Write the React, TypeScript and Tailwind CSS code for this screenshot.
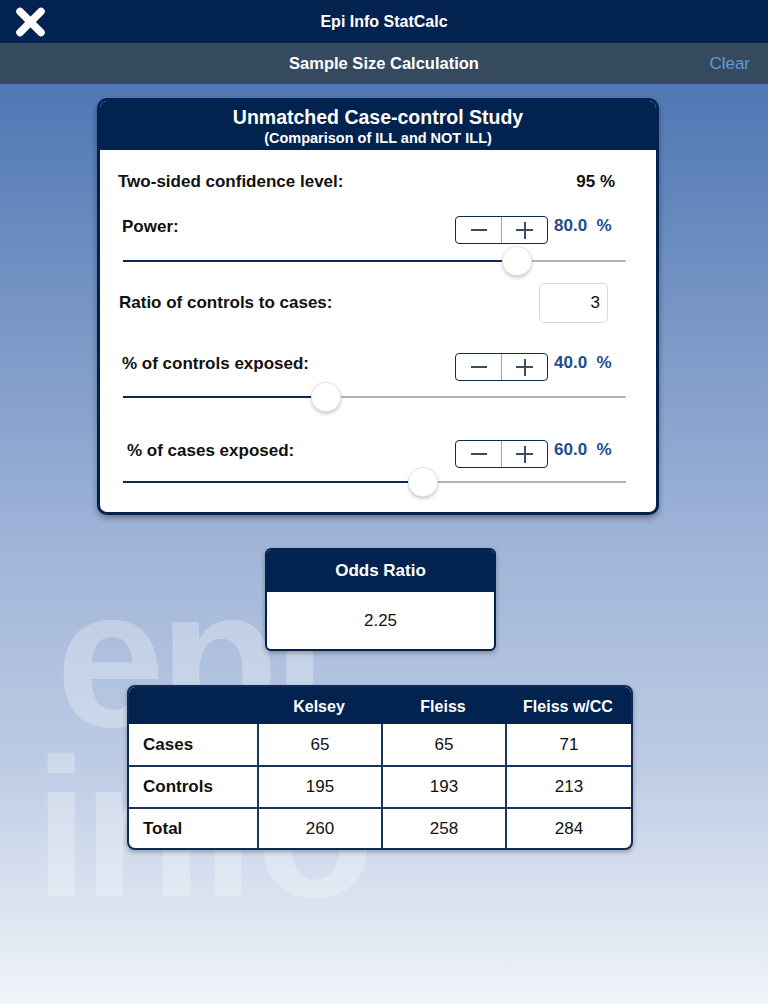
import React from "react";

const FONT = { fontFamily: '"Liberation Sans", Arial, Helvetica, sans-serif' };

function Stepper() {
  return (
    <div className="flex h-[28px] w-[93px] rounded-[4px] border border-[#0d2a57] bg-white">
      <div className="flex flex-1 items-center justify-center border-r border-[#9aa7b8]">
        <div className="h-[2px] w-[16px] bg-[#3d4c5e]" />
      </div>
      <div className="relative flex flex-1 items-center justify-center">
        <div className="h-[2px] w-[17px] bg-[#3d4c5e]" />
        <div className="absolute h-[17px] w-[2px] bg-[#3d4c5e]" />
      </div>
    </div>
  );
}

function Slider({ pos }: { pos: number }) {
  return (
    <div className="relative ml-[23px] mr-[30px] h-[28px]">
      <div className="absolute left-0 right-0 top-[13px] h-[2px] bg-[#b6b6b6]" />
      <div className="absolute left-0 top-[13px] h-[2px] bg-[#0c2a58]" style={{ width: pos }} />
      <div
        className="absolute top-0 h-[28px] w-[28px] rounded-full bg-white shadow-[0_2px_4px_rgba(0,0,0,0.3)] ring-1 ring-[#e4e4e4]"
        style={{ left: pos - 14 }}
      />
    </div>
  );
}

function StepRow({ label, value, pl }: { label: string; value: string; pl: string }) {
  return (
    <div className="flex h-[28px] items-start justify-between">
      <div className={`${pl} pt-[1px] text-[17px] font-bold leading-[20px] text-[#111]`}>{label}</div>
      <div className="flex items-start gap-[6px]">
        <Stepper />
        <div className="w-[61px] pt-[1px] text-[17px] font-bold leading-[18px] text-[#1d4d8c] whitespace-pre">{value}</div>
      </div>
    </div>
  );
}

export default function App() {
  return (
    <div
      className="relative min-h-[1004px] w-[768px] overflow-hidden bg-[linear-gradient(180deg,#4a72b1_0px,#4f77b3_84px,#9fb4d8_540px,#bccbe4_760px,#f1f4f9_1004px)]"
      style={FONT}
      aria-hidden={false}
    >
      {/* watermark */}
      <div
        aria-hidden="true"
        className="pointer-events-none absolute left-[34px] top-[580px] select-none text-[196px] font-bold leading-[158px] tracking-[-6px] text-white opacity-[0.28]"
      >
        <div className="pl-[22px]">epi</div>
        <div className="mt-[12px]">info</div>
      </div>

      {/* top bar */}
      <div className="relative flex h-[43px] items-center justify-center bg-[#02234f]">
        <svg className="absolute left-[15px] top-[7px]" width="31" height="30" viewBox="0 0 31 30">
          <path d="M5 4.5 L26 25.5 M26 4.5 L5 25.5" stroke="white" strokeWidth="7.5" strokeLinecap="round" />
        </svg>
        <div className="text-[16px] font-bold text-white">Epi Info StatCalc</div>
      </div>
      <div className="relative flex h-[41px] items-center justify-center bg-[#354a5f]">
        <div className="text-[16.5px] font-bold text-white">Sample Size Calculation</div>
        <div className="absolute right-[18px] text-[17px] text-[#5f9cd8]">Clear</div>
      </div>

      <div className="relative z-10 pt-[14px] pb-[40px]">
        {/* main card */}
        <div className="ml-[97px] w-[562px] overflow-hidden rounded-[10px] border-[3px] border-[#02234f] bg-white shadow-[0_3px_6px_rgba(0,0,0,0.35)]">
          <div className="flex h-[49px] flex-col items-center bg-[#02234f] pt-[4px] text-white">
            <div className="text-[19.5px] font-bold leading-[24px]">Unmatched Case-control Study</div>
            <div className="text-[14.5px] font-bold leading-[18px]">(Comparison of ILL and NOT ILL)</div>
          </div>
          <div className="pr-[41px] pb-[16px]">
            <div className="mt-[20px] flex h-[24px] items-center justify-between">
              <div className="pl-[18px] text-[17px] font-bold text-[#111]">Two-sided confidence level:</div>
              <div className="text-[17px] font-bold text-[#111]">95 %</div>
            </div>
            <div className="mt-[22px]">
              <StepRow label="Power:" value="80.0  %" pl="pl-[22px]" />
            </div>
            <div className="mt-[3px] mr-[-41px]">
              <Slider pos={394} />
            </div>
            <div className="mt-[8px] flex h-[40px] items-center justify-between">
              <div className="pl-[19px] text-[17px] font-bold text-[#111]">Ratio of controls to cases:</div>
              <div className="mr-[7px] flex h-[40px] w-[69px] items-center justify-end rounded-[5px] border border-[#d9d9d9] pr-[7px] text-[17px] text-[#111]">
                3
              </div>
            </div>
            <div className="mt-[30px]">
              <StepRow label="% of controls exposed:" value="40.0  %" pl="pl-[22px]" />
            </div>
            <div className="mt-[2px] mr-[-41px]">
              <Slider pos={203} />
            </div>
            <div className="mt-[29px]">
              <StepRow label="% of cases exposed:" value="60.0  %" pl="pl-[27px]" />
            </div>
            <div className="mr-[-41px]">
              <Slider pos={300} />
            </div>
          </div>
        </div>

        {/* odds ratio */}
        <div className="ml-[265px] mt-[33px] w-[231px] overflow-hidden rounded-[6px] border-2 border-[#02234f] bg-white shadow-[0_2px_5px_rgba(0,0,0,0.3)]">
          <div className="flex h-[42px] items-center justify-center bg-[#02234f] text-[17px] font-bold text-white">Odds Ratio</div>
          <div className="flex h-[57px] items-center justify-center text-[17px] text-[#111]">2.25</div>
        </div>

        {/* table */}
        <div className="ml-[127px] mt-[34px] w-[506px] overflow-hidden rounded-[8px] border-2 border-[#0f2a55] bg-white shadow-[0_2px_5px_rgba(0,0,0,0.3)]">
          <div className="grid h-[37px] grid-cols-[128px_124px_124px_126px] items-center bg-[#02234f] pt-[2px] text-[16px] font-bold text-white">
            <div />
            <div className="text-center">Kelsey</div>
            <div className="text-center">Fleiss</div>
            <div className="text-center">Fleiss w/CC</div>
          </div>
          {[
            ["Cases", "65", "65", "71", "h-[41px]"],
            ["Controls", "195", "193", "213", "h-[42px]"],
            ["Total", "260", "258", "284", "h-[41px]"],
          ].map(([a, b, c, d, h], i) => (
            <div
              key={a}
              className={`grid ${h} grid-cols-[128px_124px_124px_126px] text-[17px] text-[#111] ${i > 0 ? "border-t-2 border-[#1c355e]" : ""}`}
            >
              <div className="flex items-center pl-[14px] font-bold">{a}</div>
              <div className="flex items-center justify-center border-l-2 border-[#1c355e]">{b}</div>
              <div className="flex items-center justify-center border-l-2 border-[#1c355e]">{c}</div>
              <div className="flex items-center justify-center border-l-2 border-[#1c355e]">{d}</div>
            </div>
          ))}
        </div>
      </div>
    </div>
  );
}
